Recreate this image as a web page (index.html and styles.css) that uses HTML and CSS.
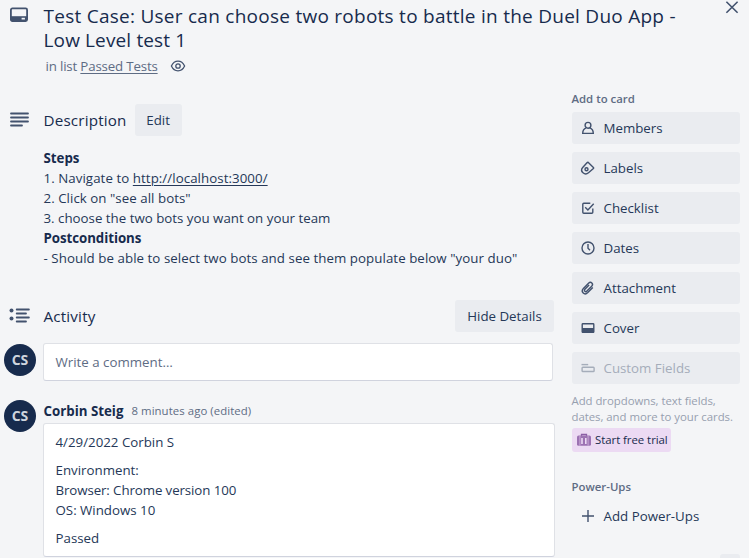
FILE: index.html
```html
<!DOCTYPE html>
<html lang="en">
<head>
<meta charset="utf-8">
<title>Card details</title>
<link rel="stylesheet" href="styles.css">
</head>
<body>
<div class="dialog">
  <main class="main">
    <header class="row header">
      <svg class="lead card-icon" width="20" height="16" viewBox="0 0 20 16"><rect x="1.9" y="1.4" width="16.2" height="12.6" rx="1.5" fill="none" stroke="currentColor" stroke-width="1.8"/><path d="M2 9.2h16V14H2z" fill="currentColor"/><rect x="12.6" y="10.8" width="3.3" height="1.7" fill="#f4f5f7"/></svg>
      <div>
        <h1 class="title"><span class="t1">Test Case: User can choose two robots to battle in the Duel Duo App -</span><br><span class="t2">Low Level test 1</span></h1>
        <p class="inlist"><span>in list <a>Passed Tests</a></span><svg width="16" height="14" viewBox="0 0 16 14" fill="none" stroke="currentColor" stroke-width="1.3"><path d="M1.4 7C3 3.6 5.3 2.2 8 2.2S13 3.6 14.6 7C13 10.4 10.7 11.8 8 11.8S3 10.4 1.4 7z"/><circle cx="8" cy="7" r="2.2"/></svg></p>
      </div>
    </header>
    <section class="description">
      <div class="row head">
        <svg class="lead" width="20" height="16" viewBox="0 0 20 16" stroke="currentColor" stroke-width="1.8" stroke-linecap="round"><path d="M2 1.5h17M2 5.5h17M2 9.5h17M2 13.5h11"/></svg>
        <h2 class="h-desc">Description</h2><button class="btn edit">Edit</button>
      </div>
      <div class="text">
        <b class="steps">Steps</b><br><span class="nav">1. Navigate to <a>http://localhost:3000/</a></span><br><span class="click">2. Click on "see all bots"</span><br><span class="choose">3. choose the two bots you want on your team</span><br><b class="post">Postconditions</b><br><span class="should">- Should be able to select two bots and see them populate below "your duo"</span>
      </div>
    </section>
    <section>
      <div class="row head activity">
        <svg class="lead list-icon" width="22" height="16" viewBox="0 0 22 16" stroke="currentColor" stroke-width="1.8" stroke-linecap="round"><path d="M7.7 1.5h12.2M7.7 5.5h9.3M7.7 9.5h12.2M7.7 13.5h9.3"/><g fill="currentColor" stroke="none"><circle cx="2.5" cy="2.6" r="2"/><circle cx="2.5" cy="10.5" r="2"/></g></svg>
        <h2 class="h-act">Activity</h2><button class="btn hide">Hide Details</button>
      </div>
      <div class="row comment-row"><span class="avatar">CS</span><div class="box input">Write a comment…</div></div>
      <div class="row post-row"><span class="avatar">CS</span>
        <div class="entry">
          <p class="meta"><b>Corbin Steig</b><span>8 minutes ago (edited)</span></p>
          <div class="box body"><p>4/29/2022 Corbin S</p><p class="env">Environment:<br><span class="chrome">Browser: Chrome version 100</span><br>OS: Windows 10</p><p>Passed</p></div>
        </div>
      </div>
    </section>
  </main>
  <aside class="side">
    <svg class="close" width="14" height="14" viewBox="0 0 14 14" stroke="currentColor" stroke-width="1.6"><path d="M1.4 1.7l11.2 11M12.6 1.7l-11.2 11"/></svg>
    <h3 class="add">Add to card</h3>
    <div class="menu">
      <div class="item"><svg viewBox="0 0 16 16"><circle cx="8" cy="5.3" r="2.9"/><path d="M6.2 7.8C4 8.7 2.7 10.2 2.7 13.4h10.6c0-3.2-1.3-4.7-3.5-5.6"/></svg><span>Members</span></div>
      <div class="item"><svg viewBox="0 0 16 16"><path d="M8.3 2.4L13.4 7.4Q14 8 13.4 8.6L8.5 12.8C6.7 14.3 4.5 14.1 3 12.8S1.2 9.3 2.7 7.5L7 2.7Q7.7 1.9 8.3 2.4z"/><circle cx="6.5" cy="9.3" r="1.5"/></svg><span>Labels</span></div>
      <div class="item"><svg viewBox="0 0 16 16"><path d="M10.3 3.2H3.8q-1 0-1 1v8q0 1 1 1h8q1 0 1-1V8.6M5.2 7.3l2.7 2.7 5.8-6.2"/></svg><span>Checklist</span></div>
      <div class="item"><svg viewBox="0 0 16 16"><circle cx="8" cy="8" r="6"/><path d="M8 4v4.2l2 2"/></svg><span>Dates</span></div>
      <div class="item"><svg viewBox="0 0 16 16"><path d="M12.8 7.4l-5 5.2c-3.3 3.2-7.5-.8-4.4-4.2l5.1-5.2c2.5-2.3 5.4.5 3.2 3l-4.8 4.9c-1.6 1.4-3.3-.3-2-1.8l4.2-4.3"/></svg><span>Attachment</span></div>
      <div class="item"><svg viewBox="0 0 16 16"><rect x="2.2" y="3.8" width="11.6" height="8.6" rx=".7"/><path d="M2 8h12v4.8H2z" fill="currentColor" stroke="none"/></svg><span>Cover</span></div>
      <div class="item disabled"><svg viewBox="0 0 16 16"><path d="M1.5 4.6h6.7"/><rect x="2.1" y="7.3" width="12" height="4.2" rx=".8"/></svg><span>Custom Fields</span></div>
    </div>
    <p class="hint"><span>Add dropdowns, text fields,</span><br><span>dates, and more to your cards.</span></p>
    <div class="trial"><svg width="14" height="14" viewBox="0 0 14 14"><path d="M4.5 3V1.5h5V3" fill="none" stroke="#8b5da5" stroke-width="1.3"/><rect x="0" y="2.6" width="14" height="10.2" rx="1.6" fill="#9c72b2"/><path d="M2.9 2.7v10M11.1 2.7v10" stroke="#d3b5df" stroke-width=".8"/><path d="M5 5v6M8.8 5v6" stroke="#ecdaf3" stroke-width="1.6"/></svg><span>Start free trial</span></div>
    <h3 class="power">Power-Ups</h3>
    <div class="item plain"><svg viewBox="0 0 16 16"><path d="M8 2v12M2 8h12"/></svg><span>Add Power-Ups</span></div>
    <div class="more"></div>
  </aside>
</div>
</body>
</html>
```

FILE: styles.css
```css
* { box-sizing: border-box; }
body { margin: 0; background: #f4f5f7; color: #172b4d; font: 13.3px/20px "Open Sans", "Noto Sans", sans-serif; overflow: hidden; }
h1, h2, h3, p { margin: 0; font-weight: 500; }
a { text-decoration: underline; text-underline-offset: 2px; text-decoration-thickness: 1px; }
svg { flex: none; color: #42526e; }
.dialog { display: flex; height: 558px; overflow: hidden; }
.main { width: 572px; flex: none; padding-top: 5px; }
.row { display: flex; padding-left: 43.5px; position: relative; }
.lead { position: absolute; left: 9px; top: 8px; }
.header { height: 99px; }
.card-icon { top: 2px; }
.title { font-size: 19px; line-height: 24px; white-space: nowrap; margin-top: -1px; letter-spacing: .26px; }
.t2 { letter-spacing: .14px; }
.inlist { display: flex; align-items: center; gap: 12px; margin: 4px 0 0 2px; color: #5e6c84; font-weight: 400; letter-spacing: -.17px; }
.head { height: 32px; align-items: center; }
h2 { font-size: 15.2px; letter-spacing: .18px; }
.btn { height: 32px; border: 0; border-radius: 3px; background: #eaecf0; color: #253858; font: inherit; padding: 0; }
.edit { width: 47px; margin-left: 8px; }
.hide { width: 99px; margin-left: auto; margin-right: 18px; }
.text { padding: 12px 0 0 43.5px; white-space: nowrap; color: #253858; }
.nav { letter-spacing: .06px; }
.click { letter-spacing: .04px; }
.should { letter-spacing: .055px; }
b { font-weight: 700; color: #172b4d; }
.post { letter-spacing: -.06px; }
.activity { margin-top: 32px; }
.comment-row { margin-top: 11px; height: 38px; }
.avatar { position: absolute; left: 4px; top: 1px; width: 32px; height: 32px; border-radius: 50%; background: #172b4d; color: #cfd4dd; font-size: 14px; font-weight: 700; line-height: 32px; text-align: center; }
.box { background: #fff; border: 1px solid #dfe1e6; border-bottom-color: #d0d3de; border-radius: 3px; margin-left: -.5px; }
.input { width: 510px; height: 38px; padding: 8px 11.5px; color: #5e6c84; }
.post-row { margin-top: 18px; }
.entry { width: 511px; }
.meta { height: 24px; display: flex; align-items: center; gap: 8px; }
.meta span { font-size: 11.4px; color: #5e6c84; font-weight: 400; letter-spacing: .06px; }
.body { width: 512px; height: 134px; padding: 8px 11.5px; color: #253858; }
.body p { font-weight: 400; }
.chrome { letter-spacing: -.1px; }
.env { margin: 8px 0; }
.side { width: 168px; flex: none; position: relative; padding-top: 91px; }
.close { position: absolute; left: 152.5px; top: 0; }
h3 { font-size: 11.4px; line-height: 16px; color: #5e6c84; font-weight: 600; margin-left: -.5px; }
.menu { display: grid; gap: 8px; margin-top: 5px; }
.item { display: flex; align-items: center; gap: 8px; height: 32px; padding-left: 7.5px; border-radius: 3px; background: #eaecf0; color: #253858; }
.item svg { width: 16px; height: 16px; fill: none; stroke: currentColor; stroke-width: 1.4; }
.item.disabled, .disabled svg { color: #a5adba; }
.hint { margin: 9px 0 0 -.5px; font-size: 11.4px; line-height: 16px; color: #97a0af; font-weight: 400; white-space: nowrap; letter-spacing: -.04px; }
.trial { display: flex; align-items: center; gap: 4px; width: 99px; height: 24px; margin-top: 3px; padding-left: 5px; border-radius: 3px; background: #ecdaf3; font-size: 11.4px; letter-spacing: -.04px; white-space: nowrap; }
.power { margin-top: 27px; }
.plain { background: none; margin-top: 5px; }
.more { width: 20px; height: 8px; margin: 22px 0 0 148px; border-radius: 3px; background: #eaecf0; }
```
